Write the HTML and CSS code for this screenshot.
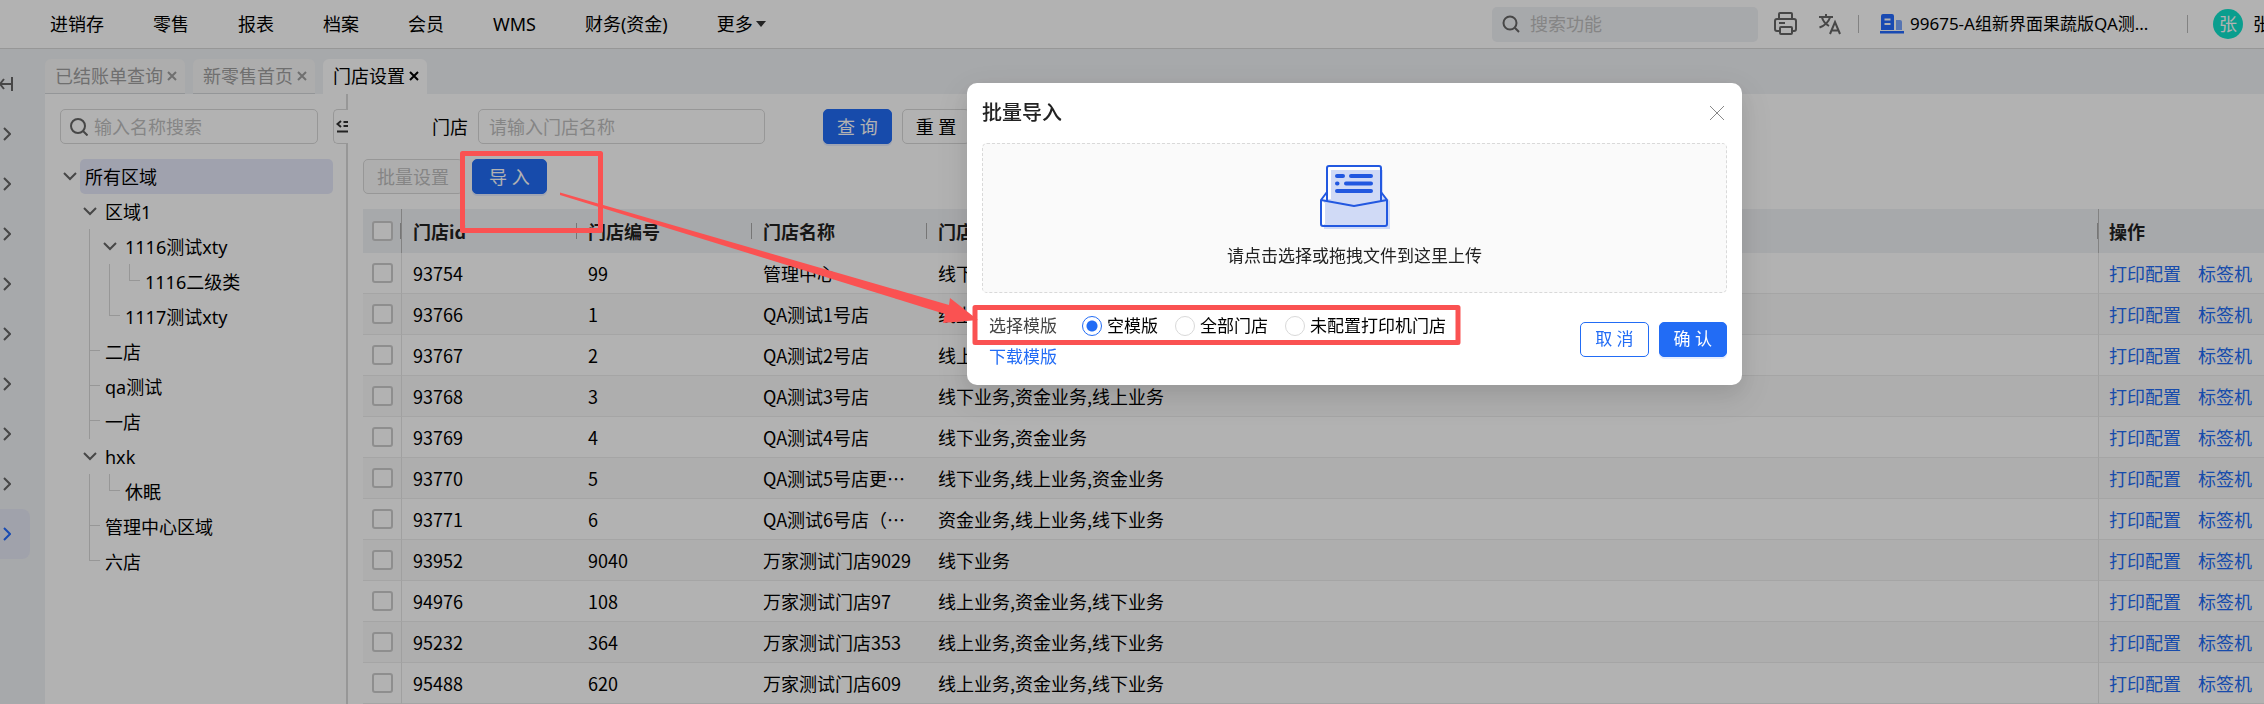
FILE: index.html
```html
<!DOCTYPE html>
<html lang="zh-CN">
<head>
    <meta charset="UTF-8">
    <meta name="viewport" content="width=device-width, initial-scale=1.0">
    <title>门店设置</title>
    <link rel="stylesheet" href="styles.css">
</head>
<body>
    <header class="topbar">
        <nav class="menu">
            <a href="#">进销存</a>
            <a href="#">零售</a>
            <a href="#">报表</a>
            <a href="#">档案</a>
            <a href="#">会员</a>
            <a href="#">WMS</a>
            <a href="#">财务(资金)</a>
            <a href="#" class="more">更多<span class="caret"></span></a>
        </nav>
        <div class="tools">
            <label class="func-search">
                <svg width="18" height="18" viewBox="0 0 18 18"><circle cx="8" cy="8" r="6.5"/><path d="M12.8 12.8L17 17"/></svg>
                <input type="text" placeholder="搜索功能" aria-label="搜索功能">
            </label>
            <button class="icon-btn" aria-label="打印">
                <svg width="24" height="24" viewBox="0 0 24 24"><path d="M5 7V2q0-1 1-1h11q1 0 1 1v5M6 19H3q-2 0-2-2V9q0-2 2-2h17q2 0 2 2v8q0 2-2 2h-2M7 15h10q1 0 1 1v5q0 1-1 1H7q-1 0-1-1v-5q0-1 1-1zM5 11h6"/></svg>
            </button>
            <button class="icon-btn" aria-label="语言">
                <svg width="24" height="24" viewBox="0 0 24 24"><path d="M1 5h14M8 2v3M12 5.500C10.500 10 7 13.500 1.500 15.500M4 5.500c1 3.500 3.500 6.500 7 8.500M12 22l5-12 5 12M13.500 18.500h7"/></svg>
            </button>
            <span class="bar"></span>
            <a href="#" class="company">
                <svg width="24" height="20" viewBox="0 0 24 20"><path fill="#246bff" d="M3 0h9q2 0 2 2v14H1V2q0-2 2-2zM0 17h24v2.500H0z"/><path fill="#7ba6ff" d="M16 6h4q2 0 2 2v8h-6z"/><path stroke="#fff" stroke-width="2" d="M4.500 5.500h6M4.500 10h6"/></svg>
                99675-A组新界面果蔬版QA测...
            </a>
            <span class="bar bar-user"></span>
            <span class="avatar">张</span>
            <span class="user-name">张</span>
        </div>
    </header>

    <div class="layout">
        <aside class="rail">
            <button class="rail-toggle" aria-label="展开菜单"><svg width="13" height="16" viewBox="0 0 13 16"><path d="M12 1v14M11 8H0M4 3L0 8l4 5"/></svg></button>
            <button aria-label="菜单1"><svg width="8" height="14" viewBox="0 0 8 14"><path d="M1 1l6 6-6 6"/></svg></button>
            <button aria-label="菜单2"><svg width="8" height="14" viewBox="0 0 8 14"><path d="M1 1l6 6-6 6"/></svg></button>
            <button aria-label="菜单3"><svg width="8" height="14" viewBox="0 0 8 14"><path d="M1 1l6 6-6 6"/></svg></button>
            <button aria-label="菜单4"><svg width="8" height="14" viewBox="0 0 8 14"><path d="M1 1l6 6-6 6"/></svg></button>
            <button aria-label="菜单5"><svg width="8" height="14" viewBox="0 0 8 14"><path d="M1 1l6 6-6 6"/></svg></button>
            <button aria-label="菜单6"><svg width="8" height="14" viewBox="0 0 8 14"><path d="M1 1l6 6-6 6"/></svg></button>
            <button aria-label="菜单7"><svg width="8" height="14" viewBox="0 0 8 14"><path d="M1 1l6 6-6 6"/></svg></button>
            <button aria-label="菜单8"><svg width="8" height="14" viewBox="0 0 8 14"><path d="M1 1l6 6-6 6"/></svg></button>
            <button class="active" aria-label="菜单9"><svg width="8" height="14" viewBox="0 0 8 14"><path d="M1 1l6 6-6 6"/></svg></button>
        </aside>

        <div class="workspace">
            <div class="tabs">
                <div class="tab"><a href="#">已结账单查询</a><button aria-label="关闭"><svg width="10" height="10" viewBox="0 0 10 10"><path d="M1 1l8 8M9 1L1 9"/></svg></button></div>
                <div class="tab"><a href="#">新零售首页</a><button aria-label="关闭"><svg width="10" height="10" viewBox="0 0 10 10"><path d="M1 1l8 8M9 1L1 9"/></svg></button></div>
                <div class="tab active"><a href="#">门店设置</a><button aria-label="关闭"><svg width="10" height="10" viewBox="0 0 10 10"><path d="M1 1l8 8M9 1L1 9"/></svg></button></div>
            </div>

            <div class="content">
                <section class="side">
                    <label class="tree-search">
                        <svg width="18" height="18" viewBox="0 0 18 18"><circle cx="8" cy="8" r="7"/><path d="M13 13l4.500 4.500"/></svg>
                        <input type="text" placeholder="输入名称搜索" aria-label="输入名称搜索">
                    </label>
                    <button class="fold" aria-label="收起">
                        <svg width="12" height="13" viewBox="0 0 12 13"><path d="M5 1L1.500 4 5 7M7.500 2H12M7.500 6H12M1 11.500h11"/></svg>
                    </button>
                    <ul class="tree" id="tree"></ul>
                </section>

                <main class="main">
                    <form class="query" onsubmit="return false">
                        <label for="shop">门店</label>
                        <input type="text" id="shop" placeholder="请输入门店名称">
                        <button class="btn primary">查 询</button>
                        <button class="btn" type="reset">重 置</button>
                    </form>
                    <div class="actions">
                        <button class="btn" disabled>批量设置</button>
                        <button class="btn primary wide">导 入</button>
                    </div>
                    <table>
                        <thead>
                            <tr>
                                <th class="check"><input type="checkbox" aria-label="全选"></th>
                                <th class="col">门店id</th>
                                <th class="col">门店编号</th>
                                <th class="col">门店名称</th>
                                <th>门店业务</th>
                                <th class="ops">操作</th>
                            </tr>
                        </thead>
                        <tbody id="shopList"></tbody>
                    </table>
                </main>
            </div>
        </div>
    </div>

    <div class="mask"></div>

    <div class="modal" role="dialog" aria-labelledby="modalTitle">
        <div class="modal-head">
            <h2 id="modalTitle">批量导入</h2>
            <button class="close" aria-label="关闭"><svg width="16" height="16" viewBox="0 0 16 16"><path d="M1 1l14 14M15 1L1 15"/></svg></button>
        </div>
        <button class="upload">
            <svg width="70" height="64" viewBox="0 0 70 64">
                <path fill="#d0daf6" d="M11 5h52v24l7 7v28H4V36l7-4z"/>
                <path fill="#fff" d="M8 2h51v3H11v29H8zM2 37l3 1v21H2z"/>
                <g fill="none" stroke="#2258e0" stroke-width="2" stroke-linejoin="round">
                    <path d="M7 36V3q0-2 2-2h50q2 0 2 2v33"/>
                    <path d="M7 27l-6 8v24q0 2 2 2h62q2 0 2-2V35l-6-8"/>
                    <path d="M1 35l33 6 33-6"/>
                </g>
                <path fill="none" stroke="#2258e0" stroke-width="4" stroke-linecap="round" d="M17 11h6M31 11h20M17 18.500h.500M26 18.500h25M17 26h34"/>
            </svg>
            <span>请点击选择或拖拽文件到这里上传</span>
        </button>
        <div class="modal-foot">
            <div class="template">
                <div class="radios">
                    <span class="radios-label">选择模版</span>
                    <label><input type="radio" name="tpl" checked>空模版</label>
                    <label><input type="radio" name="tpl">全部门店</label>
                    <label><input type="radio" name="tpl">未配置打印机门店</label>
                </div>
                <a href="#">下载模版</a>
            </div>
            <div class="modal-btns">
                <button class="btn ghost">取 消</button>
                <button class="btn primary">确 认</button>
            </div>
        </div>
    </div>

    <!-- guide marks -->
    <svg class="marks" width="1480" height="360" viewBox="0 0 1480 360">
        <rect x="462.500" y="153.500" width="138" height="77"/>
        <rect x="975" y="307.500" width="483" height="35"/>
        <path d="M560 192.500L949 305l1-7 28 22-35 3 2-9-45-14L560 195z"/>
    </svg>

    <script>
        // indent: l = guide line, blank = empty; sw: open / leaf / last
        const nodes = [
            { name: '所有区域', indent: [], sw: 'open', on: true },
            { name: '区域1', indent: [''], sw: 'open' },
            { name: '1116测试xty', indent: ['', 'l'], sw: 'open' },
            { name: '1116二级类', indent: ['', 'l', 'l'], sw: 'last' },
            { name: '1117测试xty', indent: ['', 'l'], sw: 'last' },
            { name: '二店', indent: [''], sw: 'leaf' },
            { name: 'qa测试', indent: [''], sw: 'leaf' },
            { name: '一店', indent: [''], sw: 'leaf' },
            { name: 'hxk', indent: [''], sw: 'open' },
            { name: '休眠', indent: ['', 'l'], sw: 'last' },
            { name: '管理中心区域', indent: [''], sw: 'leaf' },
            { name: '六店', indent: [''], sw: 'last' }
        ];

        const arrow = '<svg width="14" height="9" viewBox="0 0 14 9"><path d="M1 1l6 6 6-6"/></svg>';

        document.getElementById('tree').innerHTML = nodes.map(node => `
            <li>
                ${node.indent.map(i => `<span class="unit ${i ? 'line' : ''}"></span>`).join('')}
                <span class="unit ${node.sw}">${node.sw === 'open' ? arrow : ''}</span>
                <a href="#" class="node ${node.on ? 'on' : ''}">${node.name}</a>
            </li>
        `).join('');

        const shops = [
            ['93754', '99', '管理中心', '线下业务,资金业务'],
            ['93766', '1', 'QA测试1号店', '线上业务,资金业务'],
            ['93767', '2', 'QA测试2号店', '线上业务,资金业务'],
            ['93768', '3', 'QA测试3号店', '线下业务,资金业务,线上业务'],
            ['93769', '4', 'QA测试4号店', '线下业务,资金业务'],
            ['93770', '5', 'QA测试5号店更名门店', '线下业务,线上业务,资金业务'],
            ['93771', '6', 'QA测试6号店（测试）', '资金业务,线上业务,线下业务'],
            ['93952', '9040', '万家测试门店9029', '线下业务'],
            ['94976', '108', '万家测试门店97', '线上业务,资金业务,线下业务'],
            ['95232', '364', '万家测试门店353', '线上业务,资金业务,线下业务'],
            ['95488', '620', '万家测试门店609', '线上业务,资金业务,线下业务']
        ];

        document.getElementById('shopList').innerHTML = shops.map(shop => `
            <tr>
                <td class="check"><input type="checkbox" aria-label="${shop[0]}"></td>
                ${shop.map(text => `<td>${text}</td>`).join('')}
                <td class="ops"><a href="#">打印配置</a><a href="#">标签机</a></td>
            </tr>
        `).join('');
    </script>
</body>
</html>
```

FILE: styles.css
```css
* {
    box-sizing: border-box;
}

body {
    margin: 0;
    height: 100vh;
    overflow: hidden;
    display: flex;
    flex-direction: column;
    font-family: 'Noto Sans', 'Noto Sans CJK SC', sans-serif;
    font-size: 18px;
    line-height: 26px;
    color: #000;
    background-color: #f0f2f5;
}

a {
    color: inherit;
    text-decoration: none;
}

button, input {
    font: inherit;
    color: inherit;
}

button {
    padding: 0;
    border: none;
    background: none;
    cursor: pointer;
}

input::placeholder {
    color: #bfbfbf;
    opacity: 1;
}

svg {
    flex: none;
    fill: none;
    stroke-width: 2;
}

/* top bar */
.topbar {
    flex: none;
    display: flex;
    align-items: center;
    justify-content: space-between;
    height: 49px;
    padding-left: 50px;
    background-color: #fff;
    border-bottom: 1px solid #d9d9d9;
    white-space: nowrap;
}

.menu {
    display: flex;
    gap: 49px;
}

.more {
    display: flex;
    align-items: center;
    gap: 3px;
}

.caret {
    border: 5px solid transparent;
    border-top: 6px solid #333;
    border-bottom: 0;
}

.tools {
    display: flex;
    align-items: center;
}

.func-search {
    display: flex;
    align-items: center;
    gap: 10px;
    width: 266px;
    height: 35px;
    padding: 0 10px;
    margin-right: 16px;
    border-radius: 5px;
    background-color: #f0f2f5;
    stroke: #666;
}

.func-search input, .tree-search input {
    flex: 1;
    min-width: 0;
    padding: 0;
    border: none;
    outline: none;
    background: none;
}

.icon-btn {
    display: flex;
    margin-right: 20px;
    stroke: #666;
}

.bar {
    width: 1px;
    height: 18px;
    margin-right: 21px;
    background-color: #bbb;
}

.icon-btn + .bar {
    margin-left: -4px;
}

.company {
    display: flex;
    align-items: center;
    gap: 6px;
    width: 286px;
    margin-right: 21px;
    font-size: 17px;
}

.bar-user {
    margin-right: 25px;
}

.avatar {
    width: 30px;
    height: 30px;
    margin-right: 10px;
    border-radius: 50%;
    background-color: #0fe3cc;
    color: #fff;
    line-height: 30px;
    text-align: center;
}

.user-name {
    width: 11px;
    overflow: hidden;
}

/* left rail */
.layout {
    flex: 1;
    min-height: 0;
    display: flex;
}

.rail {
    flex: none;
    width: 45px;
    padding-top: 10px;
    stroke: #666;
}

.rail button {
    display: flex;
    align-items: center;
    width: 30px;
    height: 50px;
    padding-left: 3px;
    border-radius: 0 8px 8px 0;
}

.rail .rail-toggle {
    padding-left: 0;
}

.rail .active {
    background-color: #e6e9f5;
    stroke: #246bff;
}

/* tabs */
.workspace {
    flex: 1;
    min-width: 0;
    display: flex;
    flex-direction: column;
}

.tabs {
    display: flex;
    gap: 8px;
    padding-top: 10px;
}

.tab {
    display: flex;
    align-items: center;
    gap: 4px;
    height: 35px;
    padding: 0 8px 0 10px;
    border-radius: 6px 6px 0 0;
    border-bottom: 1px solid #d5d7da;
    background-color: #f8f8f8;
    color: #a0a0a0;
    stroke: #a0a0a0;
}

.tab button {
    display: flex;
}

.tab.active {
    border-bottom-color: #fff;
    background-color: #fff;
    color: #000;
    stroke: #000;
}

.content {
    flex: 1;
    min-height: 0;
    display: flex;
    background-color: #fff;
}

/* region tree */
.side {
    position: relative;
    flex: none;
    width: 303px;
    padding: 15px 13px 0 15px;
    border-right: 2px solid #d9d9d9;
}

.tree-search {
    display: flex;
    align-items: center;
    gap: 6px;
    width: 258px;
    height: 35px;
    padding: 0 9px;
    border: 1px solid #d9d9d9;
    border-radius: 5px;
    stroke: #666;
}

.fold {
    position: absolute;
    top: 15px;
    right: -2px;
    display: flex;
    align-items: center;
    justify-content: flex-end;
    width: 15px;
    height: 35px;
    border: 1px solid #d9d9d9;
    border-right: none;
    border-radius: 5px 0 0 5px;
    background-color: #fff;
    stroke: #333;
}

.tree {
    list-style: none;
    margin: 15px 0 0;
    padding: 0;
}

.tree li {
    display: flex;
    height: 35px;
}

.unit {
    position: relative;
    flex: none;
    display: flex;
    align-items: center;
    justify-content: center;
    width: 20px;
    stroke: #666;
}

.line::before, .leaf::before, .last::before {
    content: '';
    position: absolute;
    top: 0;
    left: 9px;
    width: 1px;
    height: 100%;
    background-color: #d9d9d9;
}

.last::before {
    height: 16px;
}

.leaf::after, .last::after {
    content: '';
    position: absolute;
    top: 16px;
    left: 9px;
    width: 11px;
    height: 1px;
    background-color: #d9d9d9;
}

.node {
    flex: 1;
    padding-left: 5px;
    border-radius: 5px;
    line-height: 37px;
}

.node.on {
    background-color: #e6e9fa;
}

/* list */
.main {
    flex: 1;
    min-width: 0;
    padding: 15px 0 0 15px;
}

.query {
    display: flex;
    align-items: center;
    gap: 10px;
    margin-bottom: 15px;
}

.query label {
    width: 105px;
    text-align: right;
}

.query input {
    width: 287px;
    height: 35px;
    margin-right: 48px;
    padding: 0 10px;
    border: 1px solid #d9d9d9;
    border-radius: 5px;
}

.btn {
    height: 35px;
    padding: 0 13px;
    border: 1px solid #d9d9d9;
    border-radius: 5px;
    background-color: #fff;
    white-space: nowrap;
}

.btn.primary {
    border-color: #226cf5;
    background-color: #226cf5;
    color: #fff;
    box-shadow: 0 2px 0 rgba(5, 80, 255, 0.1);
}

.btn.ghost {
    border-color: #226cf5;
    color: #226cf5;
}

.btn.wide {
    padding: 0 16px;
}

.btn:disabled {
    background-color: #fafafa;
    color: #bfbfbf;
}

.actions {
    display: flex;
    gap: 9px;
    margin-bottom: 15px;
}

table {
    width: 100%;
    table-layout: fixed;
    border-collapse: separate;
    border-spacing: 0;
    font-family: 'Noto Sans CJK SC', sans-serif;
}

th, td {
    padding: 0 11px;
    text-align: left;
    white-space: nowrap;
    overflow: hidden;
    text-overflow: ellipsis;
}

th {
    height: 44px;
    background-color: #f0f2f5;
    background-image: linear-gradient(#aaa, #aaa);
    background-size: 1px 16px;
    background-position: right center;
    background-repeat: no-repeat;
    color: #222;
    font-weight: 700;
}

td {
    height: 41px;
    border-bottom: 1px solid #ececec;
}

tr:nth-child(even) td {
    background-color: #f9f9f9;
}

.col {
    width: 175px;
}

.check {
    width: 39px;
    padding: 0 0 0 9px;
    border-right: 1px solid #e6e6e6;
    text-overflow: clip;
}

th.check {
    border-right-color: #bbb;
}

.ops {
    width: 166px;
    padding: 0 0 0 10px;
    border-left: 1px solid #e6e6e6;
}

th.ops {
    border-left-color: #bbb;
    background-image: none;
}

td.ops {
    color: #226cf5;
}

.ops a + a {
    margin-left: 17px;
}

input[type="checkbox"] {
    appearance: none;
    display: block;
    width: 21px;
    height: 20px;
    margin: 0;
    border: 2px solid #ccc;
    border-radius: 3px;
    background-color: #fff;
}

/* import dialog */
.mask {
    position: fixed;
    inset: 0;
    background-color: rgba(0, 0, 0, 0.3);
}

.modal {
    position: fixed;
    top: 83px;
    left: 967px;
    width: 775px;
    padding: 15px;
    border-radius: 10px;
    background-color: #fff;
    box-shadow: 0 8px 20px rgba(0, 0, 0, 0.08), 0 11px 35px 10px rgba(0, 0, 0, 0.06);
    font-size: 17px;
}

.modal-head {
    display: flex;
    align-items: center;
    justify-content: space-between;
    height: 30px;
    margin-bottom: 15px;
}

.modal-head h2 {
    margin: 0;
    font-size: 20px;
    font-weight: 500;
    color: #222;
}

.close {
    display: flex;
    margin-right: 2px;
    stroke: #888;
}

.close svg {
    stroke-width: 1;
}

.upload {
    display: flex;
    flex-direction: column;
    align-items: center;
    justify-content: center;
    gap: 14px;
    width: 100%;
    height: 150px;
    padding-bottom: 2px;
    border: 1px dashed #d9d9d9;
    border-radius: 5px;
    background-color: #fafafa;
    color: #222;
}

.modal-foot {
    display: flex;
    align-items: center;
    justify-content: space-between;
    padding: 15px 0 0 7px;
}

.radios {
    display: flex;
    align-items: center;
    gap: 17px;
    height: 36px;
}

.radios label {
    display: flex;
    align-items: center;
    gap: 5px;
}

.radios-label {
    margin-right: 8px;
    color: #444;
}

input[type="radio"] {
    appearance: none;
    width: 20px;
    height: 20px;
    margin: 0;
    border: 1px solid #d9d9d9;
    border-radius: 50%;
    background-color: #fff;
}

input[type="radio"]:checked {
    border-color: #226cf5;
    background-image: radial-gradient(circle, #226cf5 5px, transparent 6px);
}

.template a {
    display: block;
    color: #226cf5;
}

.modal-btns {
    display: flex;
    gap: 10px;
}

.modal-btns .btn {
    padding: 0 14px;
}

.marks {
    position: absolute;
    top: 0;
    left: 0;
    pointer-events: none;
}

.marks rect {
    stroke: #fa5252;
    stroke-width: 5;
    stroke-linejoin: round;
}

.marks path {
    fill: #fa5252;
}
```
